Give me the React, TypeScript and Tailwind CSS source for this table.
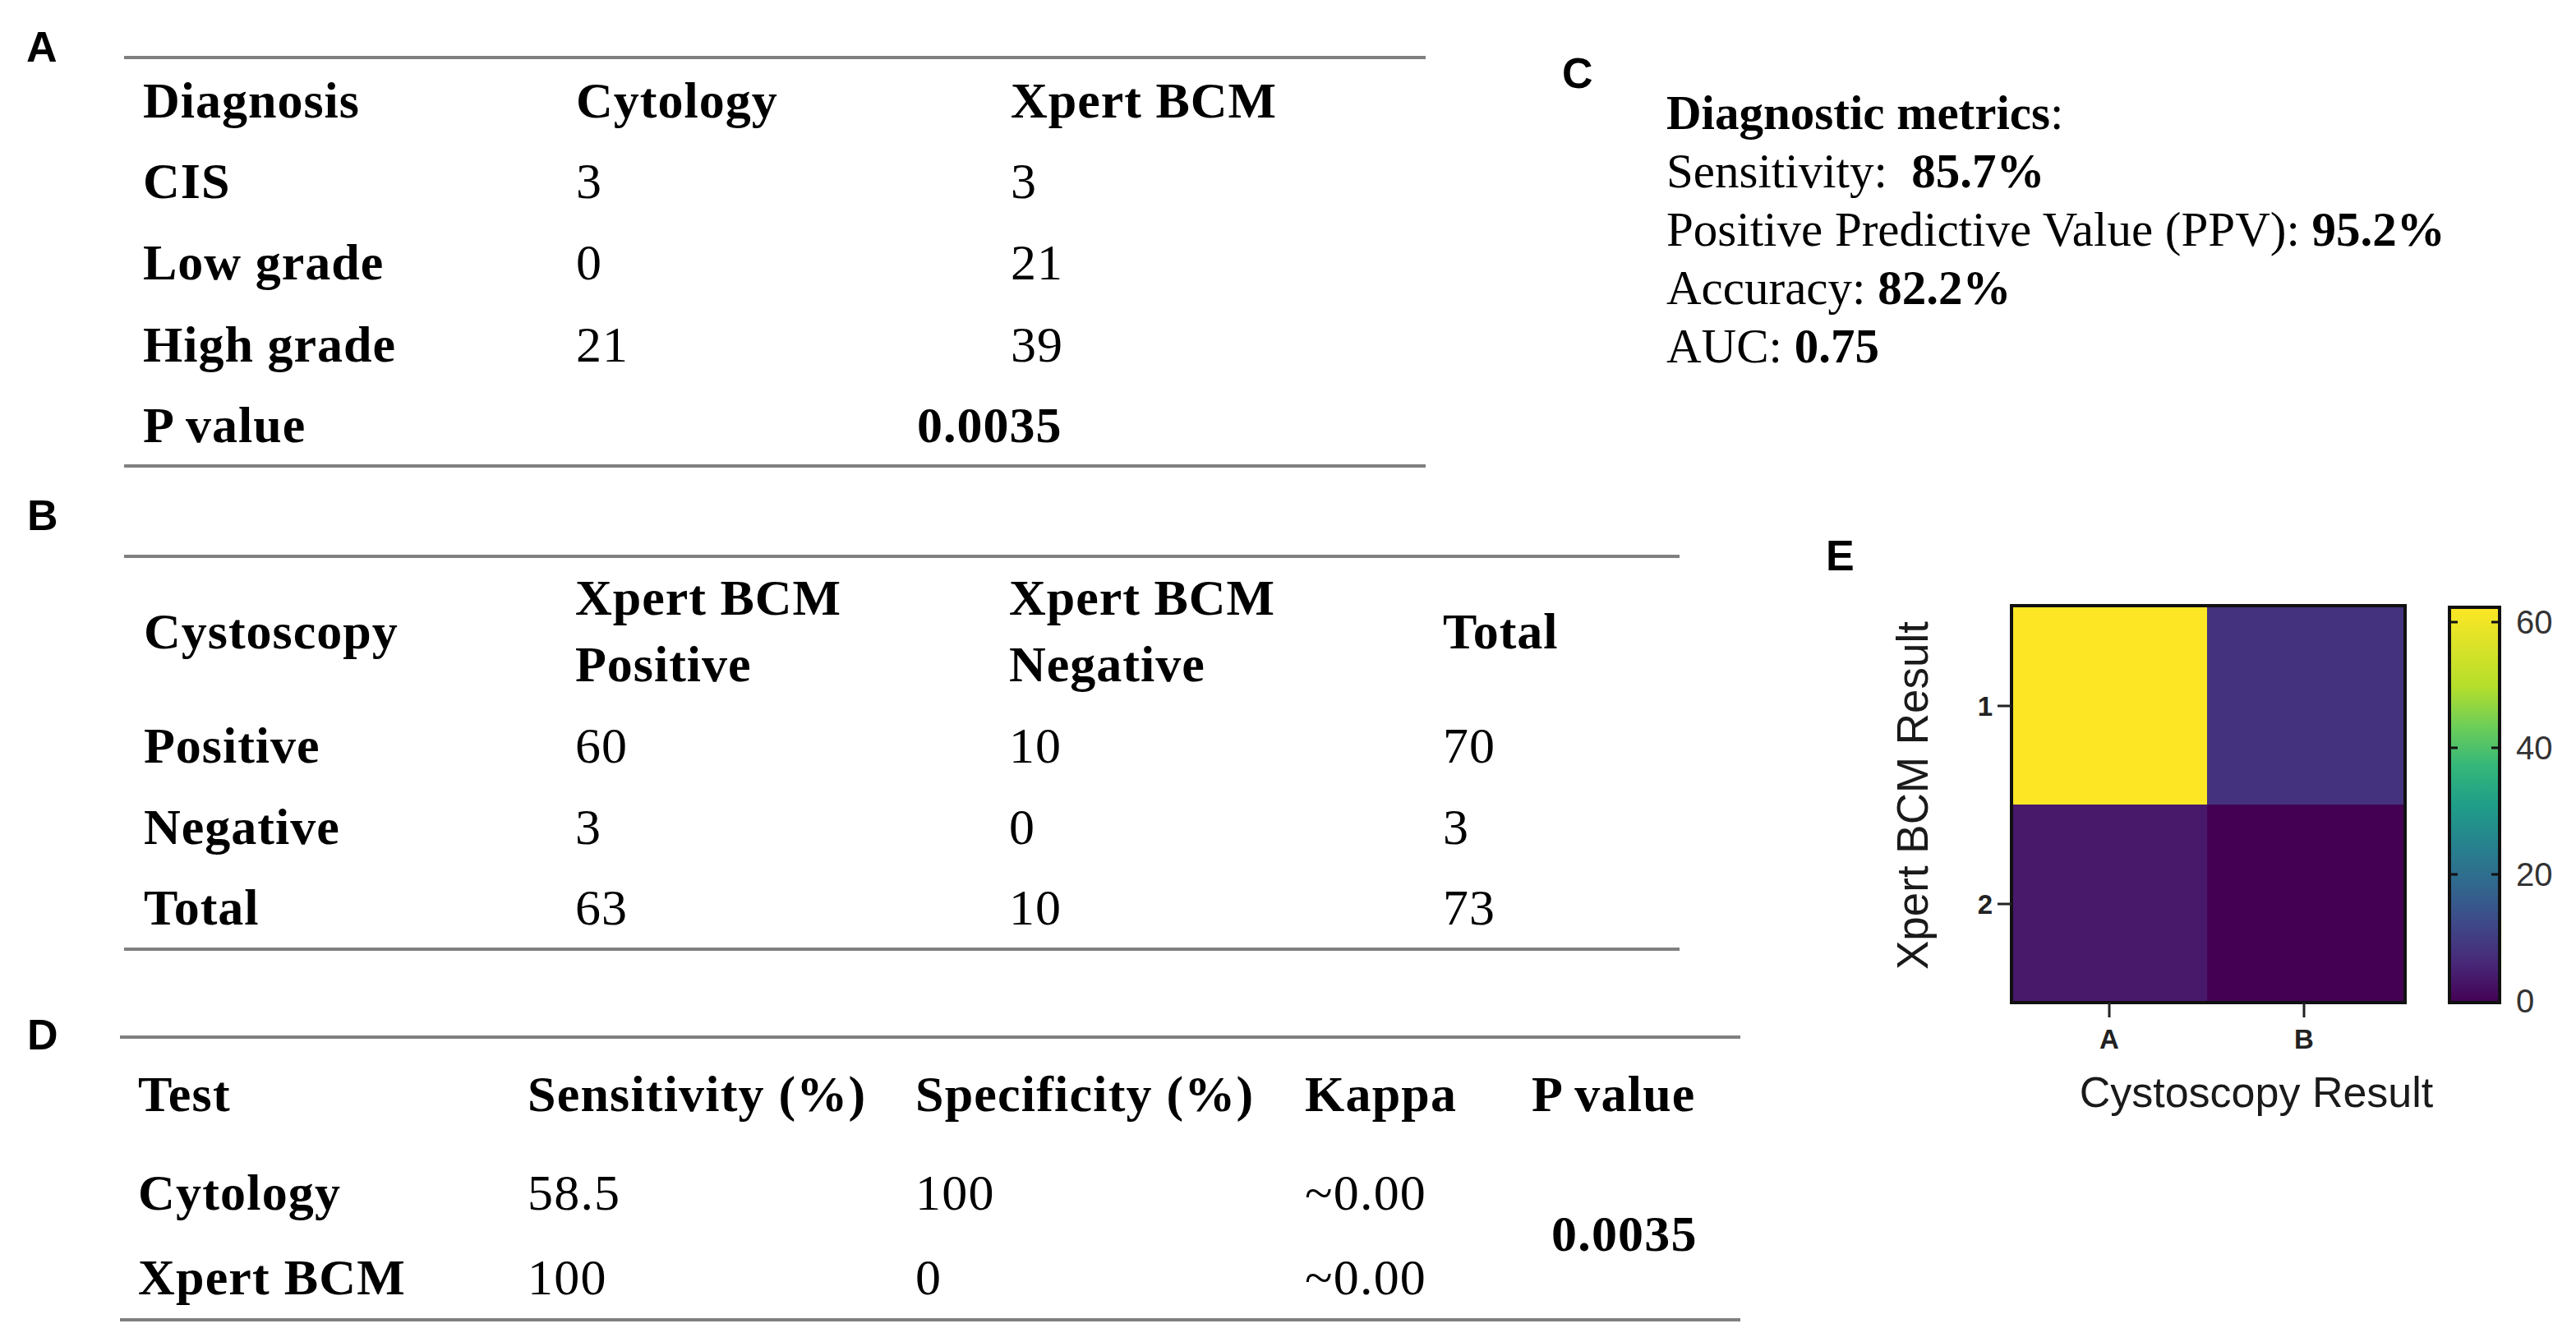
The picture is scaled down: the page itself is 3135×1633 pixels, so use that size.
const label = "font-['Liberation_Sans',Arial,sans-serif] text-[52px] leading-[52px] font-bold";

function Rule() {
  return <div className="h-[4px] bg-[#808080]" />;
}

const tableA = [
  ["CIS", "3", "3"],
  ["Low grade", "0", "21"],
  ["High grade", "21", "39"],
];

function TableA() {
  const cols = "grid grid-cols-[527px_529px_1fr] items-center pl-[23px]";
  return (
    <div className="mt-[68px] w-[1584px] text-[62px] leading-[70px] tracking-[1px]">
      <Rule />
      <div className={`${cols} h-[99px] font-bold`}>
        <div>Diagnosis</div>
        <div>Cytology</div>
        <div>Xpert BCM</div>
      </div>
      {tableA.map((r, i) => (
        <div key={r[0]} className={`${cols} ${i === 0 ? "h-[98px]" : "h-[100px]"}`}>
          <div className="font-bold">{r[0]}</div>
          <div>{r[1]}</div>
          <div>{r[2]}</div>
        </div>
      ))}
      <div className={`${cols} h-[96px]`}>
        <div className="font-bold">P value</div>
        <div className="col-span-2 pl-[415px] font-bold">0.0035</div>
      </div>
      <Rule />
    </div>
  );
}

const tableB = [
  ["Positive", "60", "10", "70", "h-[100px]"],
  ["Negative", "3", "0", "3", "h-[98px]"],
  ["Total", "63", "10", "73", "h-[98px]"],
];

function TableB() {
  const cols = "grid grid-cols-[525px_528px_528px_1fr] items-center pl-[24px]";
  return (
    <div className="mt-[85px] w-[1893px] text-[62px] leading-[70px] tracking-[1px]">
      <Rule />
      <div className={`${cols} h-[178px] font-bold`}>
        <div>Cystoscopy</div>
        <div className="leading-[81px]">Xpert BCM<br />Positive</div>
        <div className="leading-[81px]">Xpert BCM<br />Negative</div>
        <div>Total</div>
      </div>
      {tableB.map((r) => (
        <div key={r[0]} className={`${cols} ${r[4]}`}>
          <div className="font-bold">{r[0]}</div>
          <div>{r[1]}</div>
          <div>{r[2]}</div>
          <div>{r[3]}</div>
        </div>
      ))}
      <Rule />
    </div>
  );
}

function TableD() {
  return (
    <div className="mt-[103px] w-[1972px] text-[62px] leading-[70px] tracking-[1.2px]">
      <Rule />
      <div className="grid grid-cols-[474px_472px_474px_276px_1fr] grid-rows-[134px_105px_101px] items-center pl-[22px]">
        <div className="font-bold">Test</div>
        <div className="font-bold">Sensitivity (%)</div>
        <div className="font-bold">Specificity (%)</div>
        <div className="font-bold">Kappa</div>
        <div className="font-bold">P value</div>

        <div className="font-bold">Cytology</div>
        <div>58.5</div>
        <div>100</div>
        <div>~0.00</div>
        <div className="row-span-2 pl-[24px] font-bold">0.0035</div>

        <div className="font-bold">Xpert BCM</div>
        <div>100</div>
        <div>0</div>
        <div>~0.00</div>
      </div>
      <Rule />
    </div>
  );
}

function Metrics() {
  return (
    <div className="pt-[102px] text-[59px] leading-[71px]">
      <p><b>Diagnostic metrics</b>:</p>
      <p>Sensitivity:&nbsp; <b>85.7%</b></p>
      <p>Positive Predictive Value (PPV): <b>95.2%</b></p>
      <p>Accuracy: <b>82.2%</b></p>
      <p>AUC: <b>0.75</b></p>
    </div>
  );
}

const viridis = [
  ["0", "#440154"],
  ["0.1", "#482878"],
  ["0.2", "#3e4989"],
  ["0.3", "#31688e"],
  ["0.4", "#26828e"],
  ["0.5", "#1f9e89"],
  ["0.6", "#35b779"],
  ["0.7", "#6ece58"],
  ["0.8", "#b5de2b"],
  ["1", "#fde725"],
];

function Heatmap() {
  const sans = "'Liberation Sans', Arial, sans-serif";
  const ticks = [
    ["60", 55],
    ["40", 208],
    ["20", 362],
    ["0", 516],
  ] as const;
  return (
    <svg width="935" height="680" viewBox="0 0 935 680" className="block">
      <defs>
        <linearGradient id="vir" x1="0" y1="1" x2="0" y2="0">
          {viridis.map(([o, c]) => (
            <stop key={o} offset={o} stopColor={c} />
          ))}
        </linearGradient>
      </defs>

      <rect x="248" y="35" width="238" height="242" fill="#fde725" />
      <rect x="486" y="35" width="241" height="242" fill="#45327e" />
      <rect x="248" y="277" width="238" height="241" fill="#48186a" />
      <rect x="486" y="277" width="241" height="241" fill="#440154" />
      <rect x="248" y="35" width="479" height="483" fill="none" stroke="#111" strokeWidth="4" />

      <line x1="231" y1="157" x2="248" y2="157" stroke="#222" strokeWidth="3" />
      <line x1="231" y1="398" x2="248" y2="398" stroke="#222" strokeWidth="3" />
      <text x="225" y="157" textAnchor="end" dominantBaseline="central" fontFamily={sans} fontWeight="700" fontSize="33" fill="#222">1</text>
      <text x="225" y="398" textAnchor="end" dominantBaseline="central" fontFamily={sans} fontWeight="700" fontSize="33" fill="#222">2</text>

      <line x1="367" y1="518" x2="367" y2="536" stroke="#222" strokeWidth="3" />
      <line x1="604" y1="518" x2="604" y2="536" stroke="#222" strokeWidth="3" />
      <text x="367" y="562" textAnchor="middle" dominantBaseline="central" fontFamily={sans} fontWeight="700" fontSize="33" fill="#222">A</text>
      <text x="604" y="562" textAnchor="middle" dominantBaseline="central" fontFamily={sans} fontWeight="700" fontSize="33" fill="#222">B</text>

      <text x="546" y="627" textAnchor="middle" dominantBaseline="central" fontFamily={sans} fontSize="52" fill="#1a1a1a">Cystoscopy Result</text>
      <text transform="translate(127 266) rotate(-90)" textAnchor="middle" dominantBaseline="central" fontFamily={sans} fontSize="53" fill="#1a1a1a">Xpert BCM Result</text>

      <rect x="781" y="37" width="61" height="481" fill="url(#vir)" stroke="#111" strokeWidth="4" />
      {ticks.map(([t, y]) => (
        <g key={t}>
          {t !== "0" && (
            <>
              <line x1="783" y1={y} x2="791" y2={y} stroke="#111" strokeWidth="3" />
              <line x1="832" y1={y} x2="840" y2={y} stroke="#111" strokeWidth="3" />
            </>
          )}
          <text x="862" y={y} dominantBaseline="central" fontFamily={sans} fontSize="40" fill="#333">{t}</text>
        </g>
      ))}
    </svg>
  );
}

export default function App() {
  return (
    <div className="h-[1633px] w-[3135px] overflow-hidden bg-white font-['Liberation_Serif','Times_New_Roman',serif] text-black">
      <div className="flex h-[590px]">
        <section className="flex w-[1900px]">
          <div className="w-[151px] pl-[32px] pt-[31px]">
            <div className={label}>A</div>
          </div>
          <TableA />
        </section>
        <section className="flex">
          <div className="w-[128px] pl-[1px] pt-[63px]">
            <div className={label}>C</div>
          </div>
          <Metrics />
        </section>
      </div>

      <div className="flex">
        <div className="w-[2200px]">
          <section className="flex">
            <div className="w-[151px] pl-[33px] pt-[11px]">
              <div className={label}>B</div>
            </div>
            <TableB />
          </section>
          <section className="flex">
            <div className="w-[146px] pl-[33px] pt-[76px]">
              <div className={label}>D</div>
            </div>
            <TableD />
          </section>
        </div>
        <section className="flex-1">
          <div className={`${label} pt-[60px] pl-[22px]`}>E</div>
          <Heatmap />
        </section>
      </div>
    </div>
  );
}
